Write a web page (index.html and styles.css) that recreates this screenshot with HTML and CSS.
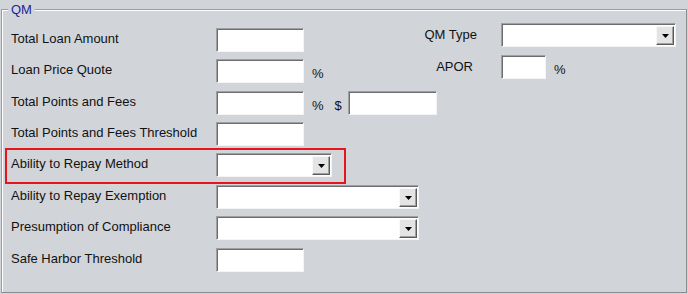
FILE: index.html
```html
<!DOCTYPE html>
<html lang="en">
<head>
    <meta charset="UTF-8">
    <title>QM</title>
    <link rel="stylesheet" href="styles.css">
</head>
<body>
    <fieldset class="qm">
        <legend>QM</legend>
        <div class="form">
            <div class="lbl">Total Loan Amount</div>
            <div class="fld"><span class="box w88"></span></div>

            <div class="side">
                <div class="slbl">QM Type</div>
                <div class="fld"><span class="box sel w174"><span class="btn"><svg width="7" height="4" viewBox="0 0 7 4"><polygon points="0,0 7,0 3.5,4" fill="#000"/></svg></span></span></div>
                <div class="slbl apor">APOR</div>
                <div class="fld"><span class="box w45"></span><span class="unit">%</span></div>
            </div>

            <div class="lbl">Loan Price Quote</div>
            <div class="fld"><span class="box w88"></span><span class="unit">%</span></div>

            <div class="lbl">Total Points and Fees</div>
            <div class="fld wide"><span class="box w88"></span><span class="unit">%</span><span class="unit dollar">$</span><span class="box w89"></span></div>

            <div class="lbl">Total Points and Fees Threshold</div>
            <div class="fld"><span class="box w88"></span></div>

            <div class="lbl hl">Ability to Repay Method</div>
            <div class="fld"><span class="box sel w116"><span class="btn"><svg width="7" height="4" viewBox="0 0 7 4"><polygon points="0,0 7,0 3.5,4" fill="#000"/></svg></span></span></div>

            <div class="lbl">Ability to Repay Exemption</div>
            <div class="fld"><span class="box sel w203"><span class="btn"><svg width="7" height="4" viewBox="0 0 7 4"><polygon points="0,0 7,0 3.5,4" fill="#000"/></svg></span></span></div>

            <div class="lbl">Presumption of Compliance</div>
            <div class="fld"><span class="box sel w203"><span class="btn"><svg width="7" height="4" viewBox="0 0 7 4"><polygon points="0,0 7,0 3.5,4" fill="#000"/></svg></span></span></div>

            <div class="lbl">Safe Harbor Threshold</div>
            <div class="fld"><span class="box w88"></span></div>
        </div>
    </fieldset>
</body>
</html>
```

FILE: styles.css
```css
*{
    box-sizing: border-box;
}
html, body{
    margin: 0;
    padding: 0;
    background: #d1d5d9;
    overflow: hidden;
}
body{
    padding: 2px 1px 0 1px;
    font-family: "Liberation Sans", Arial, sans-serif;
    font-size: 13px;
    color: #111;
}
.qm{
    margin: 0;
    height: 291px;
    padding: 11px 0 0 9px;
    border: 1px solid #9c9c9c;
    border-right-color: #8c8c8c;
    border-bottom-color: #8c8c8c;
    box-shadow: inset 1px 1px 0 #fff;
}
.qm legend{
    padding: 0 3px;
    margin-left: -3px;
    color: #1f1f99;
    line-height: 15px;
    background: #d1d5d9;
}
.form{
    display: grid;
    grid-template-columns: 205px 204px 1fr;
    grid-template-rows: 31px 32px 31px 31px 32px 31px 32px 30px;
    align-items: start;
}
.lbl{
    grid-column: 1;
    height: 24px;
    display: flex;
    align-items: center;
    padding-bottom: 4px;
    position: relative;
}
.hl::after{
    content: "";
    position: absolute;
    left: -6px;
    top: -5px;
    width: 337px;
    height: 32px;
    border: 2px solid #e8141c;
}
.fld{
    grid-column: 2;
    height: 24px;
    display: flex;
    align-items: center;
}
.fld.wide{
    grid-column: 2 / 4;
}
.box{
    display: block;
    height: 24px;
    background: #fff;
    border: 1px solid;
    border-color: #a0a0a0 #f4f4f4 #f4f4f4 #a0a0a0;
    box-shadow: inset 1px 1px 0 #6d6d6d;
}
.w45{ width: 45px; }
.w88{ width: 88px; }
.w89{ width: 89px; }
.w116{ width: 116px; }
.w174{ width: 175px; }
.w203{ width: 203px; }
.sel{
    display: flex;
    justify-content: flex-end;
    padding: 2px 1px 1px 2px;
}
.btn{
    width: 18px;
    height: 19px;
    display: flex;
    align-items: center;
    justify-content: center;
    background: #e4e4e4;
    border: 1px solid;
    border-color: #f8f8f8 #5a5a5a #5a5a5a #f8f8f8;
    box-shadow: inset -1px -1px 0 #a0a0a0;
}
.btn svg{
    display: block;
    margin-top: 1px;
}
.unit{
    margin-left: 8px;
    padding-top: 4px;
}
.dollar{
    margin-left: 11px;
    margin-right: 6px;
}
.side{
    grid-column: 3;
    grid-row: 1 / 3;
    margin-top: -5px;
    display: grid;
    grid-template-columns: 57px 175px;
    grid-template-rows: 32px 26px;
    column-gap: 24px;
    align-items: start;
}
.side .fld{
    grid-column: 2;
}
.slbl{
    grid-column: 1;
    height: 24px;
    display: flex;
    align-items: center;
    justify-content: flex-end;
    padding-bottom: 2px;
}
.slbl.apor{
    padding-right: 4px;
}
```
